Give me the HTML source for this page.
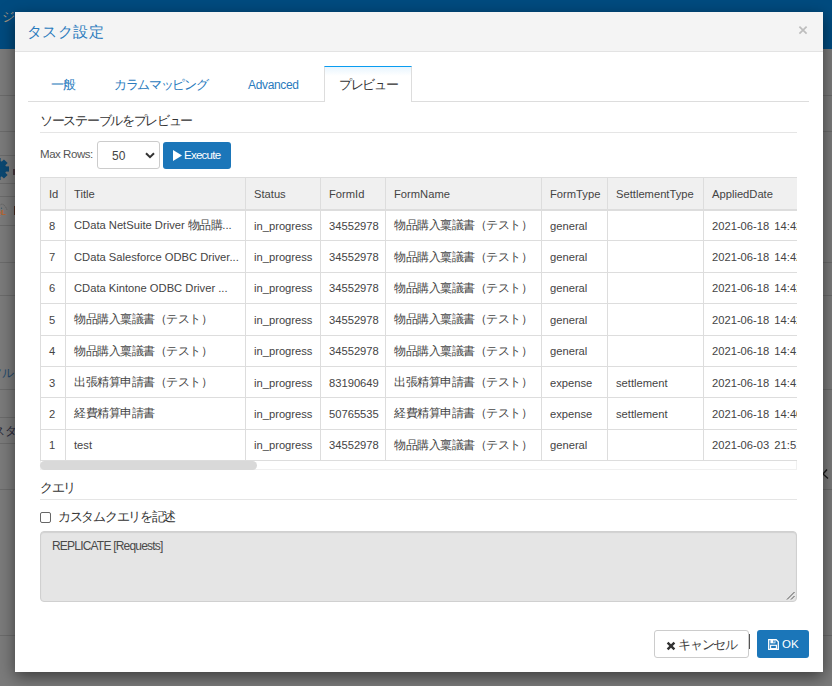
<!DOCTYPE html>
<html lang="ja">
<head>
<meta charset="utf-8">
<style>
*{box-sizing:border-box}
html,body{margin:0;padding:0}
body{width:832px;height:686px;overflow:hidden;position:relative;background:#7b7b7b;font-family:"Liberation Sans",sans-serif;font-size:12px;color:#333}
.abs{position:absolute}
.bgline{position:absolute;left:0;width:832px;height:1px;background:#6b6b6b}
.topbar{position:absolute;left:0;top:0;width:832px;height:49px;background:#004b7f}
.modal{position:absolute;left:15px;top:12px;width:808px;height:660px;background:#fff;box-shadow:0 5px 15px rgba(0,0,0,.5)}
.mh{position:absolute;left:0;top:0;width:808px;height:40px;background:#f4f4f4;border-bottom:1px solid #e3e3e3}
.title{position:absolute;left:12px;top:10px;font-size:15px;line-height:20px;color:#2a7bbd;letter-spacing:0.4px;white-space:nowrap}
.close{position:absolute;left:783px;top:13px;width:10px;height:10px}
.tabline{position:absolute;left:13px;top:89px;width:781px;height:1px;background:#ddd}
.tab{position:absolute;top:65px;line-height:16px;color:#2a7bbd;white-space:nowrap;font-size:12px}
.tab.jp{letter-spacing:-1.35px;font-size:12.8px}
.sec.jp{letter-spacing:-1.3px;font-size:12.9px}
.tab.lat{letter-spacing:-0.35px}
.jp{letter-spacing:-0.4px}
.acttab{position:absolute;left:309px;top:54px;width:88px;height:36px;border:1px solid #ddd;border-bottom:0;border-top:1px solid #0a9cf0;background:linear-gradient(#e8f5fe,#fff 9px)}
.sec{position:absolute;left:25px;white-space:nowrap;font-size:12px;line-height:16px;color:#333}
.secline{position:absolute;left:25px;width:757px;height:1px;background:#e5e5e5}
.sel{position:absolute;left:82px;top:129px;width:63px;height:28px;border:1px solid #ccc;border-radius:3px;background:#fff}
.btnp{position:absolute;background:#1b76b9;border-radius:3px;color:#fff}
.tblwrap{position:absolute;left:25px;top:165px;width:757px;height:294px;overflow:hidden}
table{border-collapse:collapse;table-layout:fixed;font-size:11.2px;color:#444}
td .jp,th .jp{font-size:12px;letter-spacing:-0.5px}
td,th{border:1px solid #ddd;padding:1px 0 0 8px;white-space:nowrap;overflow:hidden;text-align:left;font-weight:normal}
th{background:#f0f0f0;height:32px;border-bottom:2px solid #ddd}
td{height:31.375px}
.sb{position:absolute;left:25px;top:449px;width:757px;height:9px;border:1px solid #f0f0f0;border-top:0}
.thumb{position:absolute;left:25px;top:449px;width:217px;height:9px;border-radius:5px;background:#d9d9d9}
.ta{position:absolute;left:25px;top:519px;width:757px;height:71px;background:#e5e5e5;border:1px solid #d0d0d0;border-radius:4px;box-shadow:inset 0 1px 1px rgba(0,0,0,.09)}
.cb{position:absolute;left:25px;top:500px;width:11px;height:11px;border:1px solid #666;border-radius:2px;background:#fff}
.btnd{position:absolute;left:639px;top:618px;width:95px;height:28px;border:1px solid #ccc;border-radius:3px;background:#fff}
</style>
</head>
<body>
<div class="topbar"></div>
<div class="abs" style="left:2px;top:9px;font-size:13px;line-height:16px;color:#a09282">ジ</div>
<svg class="abs" style="left:0;top:157px" width="10" height="24" viewBox="0 0 10 24"><g fill="#0b4872" transform="translate(-2 12)"><circle r="8.3"/><rect x="-2.6" y="-11" width="5.2" height="22"/><rect x="-2.6" y="-11" width="5.2" height="22" transform="rotate(45)"/><rect x="-2.6" y="-11" width="5.2" height="22" transform="rotate(-45)"/><rect x="-11" y="-2.6" width="22" height="5.2"/></g></svg>
<div class="abs" style="left:13px;top:169px;width:2px;height:6px;background:#4a3a40"></div>
<div class="abs" style="left:-5px;top:208px;font-size:8px;line-height:10px;color:#b8652a;font-weight:bold">QL</div>
<svg class="abs" style="left:0;top:203px" width="10" height="10" viewBox="0 0 10 10"><path d="M-1 3Q2 0 4 2Q6 4 7 7" fill="none" stroke="#5a5a5a" stroke-width="0.8" stroke-dasharray="1.2 0.8"/><circle cx="1.5" cy="5.2" r="0.7" fill="#3e5a6a"/></svg>
<div class="abs" style="left:14px;top:206px;width:1px;height:9px;background:#4a2c22"></div>
<div class="abs" style="left:-10px;top:365px;font-size:12px;line-height:16px;color:#24496c">ツル</div>
<div class="abs" style="left:-7px;top:423px;font-size:12px;line-height:16px;color:#262638">スタ</div>
<svg class="abs" style="left:822px;top:468px" width="8" height="12" viewBox="0 0 8 12"><path d="M5 1.5L1 6L6 10.5" fill="none" stroke="#1a1a1a" stroke-width="1.4"/></svg>
<div class="bgline" style="top:95px"></div>
<div class="bgline" style="top:131px"></div>
<div class="bgline" style="top:155px;width:15px"></div>
<div class="bgline" style="top:183px;width:15px"></div>
<div class="bgline" style="top:196px;width:15px"></div>
<div class="bgline" style="top:225px;width:15px"></div>
<div class="bgline" style="top:262px"></div>
<div class="bgline" style="top:295px"></div>
<div class="bgline" style="top:389px"></div>
<div class="bgline" style="top:417px;width:15px"></div>
<div class="bgline" style="top:443px;width:15px"></div>
<div class="bgline" style="top:489px"></div>
<div class="bgline" style="top:635px"></div>

<div class="modal">
  <div class="mh">
    <div class="title">タスク設定</div>
    <svg class="close" viewBox="0 0 10 10"><path d="M1.4 1.6L8.6 8.6M8.6 1.6L1.4 8.6" stroke="#bdbdbd" stroke-width="1.7"/></svg>
  </div>

  <div class="tabline"></div>
  <div class="acttab"></div>
  <div class="tab jp" style="left:36px">一般</div>
  <div class="tab jp" style="left:99px">カラムマッピング</div>
  <div class="tab lat" style="left:233px">Advanced</div>
  <div class="tab jp" style="left:324px;color:#333">プレビュー</div>

  <div class="sec jp" style="top:101px">ソーステーブルをプレビュー</div>
  <div class="secline" style="top:120px"></div>

  <div class="sec" style="top:134px;font-size:11.5px;letter-spacing:-0.45px;color:#555">Max Rows:</div>
  <div class="sel"><span class="abs" style="left:14px;top:6px;line-height:16px;color:#444">50</span>
    <svg class="abs" style="left:47px;top:10px" width="10" height="7" viewBox="0 0 10 7"><path d="M1 1.2L5 5.2L9 1.2" fill="none" stroke="#333" stroke-width="2"/></svg>
  </div>
  <div class="btnp" style="left:148px;top:130px;width:68px;height:27px">
    <svg class="abs" style="left:10px;top:8px" width="9" height="11" viewBox="0 0 9 11"><path d="M0 0L9 5.5L0 11Z" fill="#fff"/></svg>
    <span class="abs" style="left:21px;top:5px;line-height:16px;font-size:11.5px;letter-spacing:-0.75px">Execute</span>
  </div>

  <div class="tblwrap">
  <table style="width:783px">
    <colgroup><col style="width:25px"><col style="width:180px"><col style="width:75px"><col style="width:65px"><col style="width:156px"><col style="width:66px"><col style="width:96px"><col style="width:120px"></colgroup>
    <thead><tr><th>Id</th><th>Title</th><th>Status</th><th>FormId</th><th>FormName</th><th>FormType</th><th>SettlementType</th><th>AppliedDate</th></tr></thead>
    <tbody>
      <tr><td>8</td><td>CData NetSuite Driver <span class="jp">物品購</span>...</td><td>in_progress</td><td>34552978</td><td><span class="jp">物品購入稟議書（テスト）</span></td><td>general</td><td></td><td style="word-spacing:2px">2021-06-18 14:42</td></tr>
      <tr><td>7</td><td>CData Salesforce ODBC Driver...</td><td>in_progress</td><td>34552978</td><td><span class="jp">物品購入稟議書（テスト）</span></td><td>general</td><td></td><td style="word-spacing:2px">2021-06-18 14:42</td></tr>
      <tr><td>6</td><td>CData Kintone ODBC Driver ...</td><td>in_progress</td><td>34552978</td><td><span class="jp">物品購入稟議書（テスト）</span></td><td>general</td><td></td><td style="word-spacing:2px">2021-06-18 14:42</td></tr>
      <tr><td>5</td><td><span class="jp">物品購入稟議書（テスト）</span></td><td>in_progress</td><td>34552978</td><td><span class="jp">物品購入稟議書（テスト）</span></td><td>general</td><td></td><td style="word-spacing:2px">2021-06-18 14:42</td></tr>
      <tr><td>4</td><td><span class="jp">物品購入稟議書（テスト）</span></td><td>in_progress</td><td>34552978</td><td><span class="jp">物品購入稟議書（テスト）</span></td><td>general</td><td></td><td style="word-spacing:2px">2021-06-18 14:41</td></tr>
      <tr><td>3</td><td><span class="jp">出張精算申請書（テスト）</span></td><td>in_progress</td><td>83190649</td><td><span class="jp">出張精算申請書（テスト）</span></td><td>expense</td><td>settlement</td><td style="word-spacing:2px">2021-06-18 14:41</td></tr>
      <tr><td>2</td><td><span class="jp">経費精算申請書</span></td><td>in_progress</td><td>50765535</td><td><span class="jp">経費精算申請書（テスト）</span></td><td>expense</td><td>settlement</td><td style="word-spacing:2px">2021-06-18 14:40</td></tr>
      <tr><td>1</td><td>test</td><td>in_progress</td><td>34552978</td><td><span class="jp">物品購入稟議書（テスト）</span></td><td>general</td><td></td><td style="word-spacing:2px">2021-06-03 21:51</td></tr>
    </tbody>
  </table>
  </div>
  <div class="sb"></div>
  <div class="thumb"></div>

  <div class="sec jp" style="top:468px">クエリ</div>
  <div class="secline" style="top:487px"></div>
  <div class="cb"></div>
  <div class="sec jp" style="left:43px;top:497px">カスタムクエリを記述</div>
  <div class="ta"><span class="abs" style="left:11px;top:6px;line-height:16px;color:#4a4a4a;font-size:12px;letter-spacing:-0.8px">REPLICATE [Requests]</span>
    <svg class="abs" style="right:1px;bottom:1px" width="9" height="9" viewBox="0 0 9 9"><path d="M8.5 1L1 8.5M8.5 5L5 8.5" stroke="#555" stroke-width="1"/></svg>
  </div>

  <div class="btnd">
    <svg class="abs" style="left:11px;top:10px" width="10" height="10" viewBox="0 0 10 10"><path d="M1.6 1.6L8.4 8.4M8.4 1.6L1.6 8.4" stroke="#333" stroke-width="2.4"/></svg>
    <span class="abs jp" style="left:23px;top:6px;line-height:16px;font-size:12.5px;color:#444;letter-spacing:-1.2px">キャンセル</span>
  </div>
  <div class="abs" style="left:734px;top:622px;width:1px;height:15px;background:#555"></div>
  <div class="btnp" style="left:742px;top:618px;width:52px;height:28px">
    <svg class="abs" style="left:11px;top:9px" width="11" height="11" viewBox="0 0 11 11"><path d="M0.7 0.7H8.2L10.3 2.8V10.3H0.7Z" fill="none" stroke="#fff" stroke-width="1.3"/><rect x="2.4" y="0.7" width="5" height="3.6" fill="#fff"/><rect x="5.3" y="1.4" width="1.3" height="2.2" fill="#1b76b9"/><rect x="2.6" y="6.3" width="5.8" height="3.3" fill="none" stroke="#fff" stroke-width="1.1"/></svg>
    <span class="abs" style="left:25px;top:6px;line-height:16px;font-size:11.5px">OK</span>
  </div>
</div>
</body>
</html>
